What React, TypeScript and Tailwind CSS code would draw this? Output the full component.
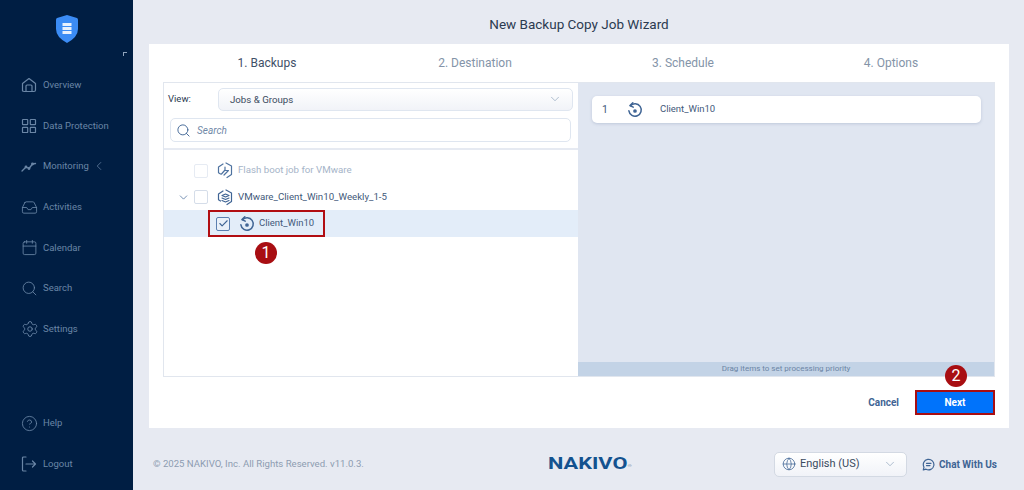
import React from "react";
import { ChevronDown, ChevronLeft, CircleHelp, Globe, Inbox, Calendar, Search, Settings, Check } from "lucide-react";

const font = "font-['Roboto',Arial,sans-serif]";
const side = "#6a86a6";

function Shield() {
  return (
    <svg width="22" height="28" viewBox="0 0 22 28">
      <path d="M11 0 L21 3 Q22 3.3 22 5 V14 Q22 22 11 28 Q0 22 0 14 V5 Q0 3.3 1 3 Z" fill="#3b8cf5" />
      <rect x="6.5" y="8" width="9" height="3" fill="#e8f1fd" />
      <rect x="6.5" y="12" width="9" height="3" fill="#e8f1fd" />
      <rect x="6.5" y="16" width="9" height="3" fill="#e8f1fd" />
    </svg>
  );
}

function Home() {
  return (
    <svg width="16" height="16" viewBox="0 0 16 16" fill="none" stroke={side} strokeWidth="1.2" strokeLinejoin="round">
      <path d="M1.5 14 V6.5 L8 1.5 L14.5 6.5 V13 Q14.5 14.5 13 14.5 H3 Q1.5 14.5 1.5 13 Z" />
      <path d="M5 14.5 V9 Q5 8 6 8 H10 Q11 8 11 9 V14.5" />
    </svg>
  );
}

function Grid() {
  return (
    <svg width="16" height="16" viewBox="0 0 16 16" fill="none" stroke={side} strokeWidth="1.2">
      <rect x="1.5" y="1.5" width="5.2" height="5.2" rx="0.6" />
      <rect x="9.3" y="1.5" width="5.2" height="5.2" rx="0.6" />
      <rect x="1.5" y="9.3" width="5.2" height="5.2" rx="0.6" />
      <rect x="9.3" y="9.3" width="5.2" height="5.2" rx="0.6" />
    </svg>
  );
}

function Trend() {
  return (
    <svg width="16" height="16" viewBox="0 0 16 16" fill="none" stroke={side} strokeWidth="1.3" strokeLinecap="round" strokeLinejoin="round">
      <path d="M1 13 L5 9 L8 10.5 L11.5 6 L14.5 5.5" />
      <circle cx="5" cy="9" r="0.8" fill={side} />
      <circle cx="8" cy="10.5" r="0.8" fill={side} />
      <circle cx="11.5" cy="6" r="0.8" fill={side} />
    </svg>
  );
}

function LogoutIcon() {
  return (
    <svg width="16" height="16" viewBox="0 0 16 16" fill="none" stroke={side} strokeWidth="1.2" strokeLinecap="round" strokeLinejoin="round">
      <path d="M5 1 H2.5 Q1.5 1 1.5 2 V14 Q1.5 15 2.5 15 H5" />
      <path d="M5 8 H14.5 M11.5 5 L14.5 8 L11.5 11" />
    </svg>
  );
}

function ChatIcon() {
  return (
    <svg width="13" height="13" viewBox="0 0 13 13" fill="none" stroke="#3f6494" strokeWidth="1.2" strokeLinecap="round" strokeLinejoin="round">
      <path d="M1.3 12 L2 9.2 A5.3 5.3 0 1 1 4 11.2 Z" />
      <path d="M4.5 5.3 H9 M4.5 7.6 H8" />
    </svg>
  );
}

function NavItem({ icon, label, extra }: { icon: React.ReactNode; label: string; extra?: React.ReactNode }) {
  return (
    <div className="h-[40.6px] flex items-center pl-[21px]">
      <span className="w-[22px] flex items-center">{icon}</span>
      <span className="text-[9.5px] text-[#6a86a6]">{label}</span>
      {extra}
    </div>
  );
}

function BackupIcon({ size = 16 }: { size?: number }) {
  return (
    <svg width={size} height={size} viewBox="0 0 16 16" fill="none" stroke="#3f6494" strokeWidth="1.5" strokeLinecap="round" strokeLinejoin="round">
      <path d="M3.4 3.8 A6.2 6.2 0 1 1 1.9 8.8" />
      <path d="M5.8 0.8 L3 3.6 L6.2 5.2" />
      <circle cx="8" cy="9" r="1.1" fill="#3f6494" />
    </svg>
  );
}

function JobIcon({ faded }: { faded?: boolean }) {
  const c = faded ? "#4f73a0" : "#3f6494";
  return (
    <svg width="16" height="17" viewBox="0 0 16 17" fill="none" stroke={c} strokeWidth="1.2" strokeLinejoin="round" strokeLinecap="round">
      <path d="M9 1 L14.5 4 V12.5 L10 15.5 M3.5 12 L1.5 10.8 V5 L6 2" />
      {faded ? (
        <path d="M4.5 12 L8 8 M8 5 V8.5 H11.5 M7 13 L11 9" />
      ) : (
        <path d="M5 6.5 L8.5 5 L12 6.5 L8.5 8 Z M5 9 L8.5 10.5 L12 9 M5 11.5 L8.5 13 L12 11.5" />
      )}
    </svg>
  );
}

function Box({ checked, faded }: { checked?: boolean; faded?: boolean }) {
  return (
    <span className={`w-[14px] h-[14px] rounded-[2px] border flex items-center justify-center shrink-0 ${checked ? "border-[#5b7fb0] bg-[#e9f0f9]" : faded ? "border-[#e6ebf3] bg-white" : "border-[#d5dde9] bg-white"}`}>
      {checked && <Check size={11} color="#3f6494" strokeWidth={2.4} />}
    </span>
  );
}

function Badge({ n }: { n: number }) {
  return (
    <span className="w-[22px] h-[22px] rounded-full bg-[#a80e12] text-white flex items-center justify-center text-[16px] leading-none">{n}</span>
  );
}

export default function App() {
  return (
    <div className={`${font} w-[1024px] h-[490px] flex overflow-hidden bg-[#e7eaf2]`}>
      <aside className="w-[133px] shrink-0 h-full bg-[#001e43] flex flex-col">
        <div className="h-[65px] flex justify-center pt-[15px]">
          <Shield />
        </div>
        <div className="h-[0px] relative">
          <span className="absolute left-[123px] top-[-13px] w-[4px] h-[4px] border-l border-t border-[#8fa3bb]" />
        </div>
        <div>
          <NavItem icon={<Home />} label="Overview" />
          <NavItem icon={<Grid />} label="Data Protection" />
          <NavItem icon={<Trend />} label="Monitoring" extra={<ChevronLeft size={14} color={side} strokeWidth={1.3} className="ml-[3px]" />} />
          <NavItem icon={<Inbox size={17} color={side} strokeWidth={1.2} />} label="Activities" />
          <NavItem icon={<Calendar size={17} color={side} strokeWidth={1.2} />} label="Calendar" />
          <NavItem icon={<Search size={17} color={side} strokeWidth={1.2} />} label="Search" />
          <NavItem icon={<Settings size={18} color={side} strokeWidth={1.2} />} label="Settings" />
        </div>
        <div className="mt-auto pb-[6px]">
          <NavItem icon={<CircleHelp size={17} color={side} strokeWidth={1.2} />} label="Help" />
          <NavItem icon={<LogoutIcon />} label="Logout" />
        </div>
      </aside>

      <main className="flex-1 min-w-0 flex flex-col pl-[16px] pr-[15px]">
        <h1 className="h-[44px] pt-[16px] text-center text-[13.5px] leading-[16px] text-[#2b3a50] font-normal">New Backup Copy Job Wizard</h1>

        <section className="h-[384px] bg-white px-[14px] flex flex-col">
          <div className="h-[38px] grid grid-cols-4 items-center text-[12px] text-center">
            <span className="text-[#3f5068]">1. Backups</span>
            <span className="text-[#8494a8]">2. Destination</span>
            <span className="text-[#8494a8]">3. Schedule</span>
            <span className="text-[#8494a8]">4. Options</span>
          </div>

          <div className="h-[295px] flex border border-[#e1e6ee]">
            <div className="w-[414px] flex flex-col">
              <div className="h-[67px] border-b-2 border-[#e6eaf2] pl-[4px] pt-[4px] flex flex-col">
                <div className="flex items-center h-[24px]">
                  <span className="w-[50px] text-[9.5px] text-[#2b3a50]">View:</span>
                  <div className="w-[355px] h-[23px] rounded-[5px] border border-[#dfe6f0] bg-gradient-to-b from-white to-[#f1f3f8] flex items-center justify-between pl-[11px] pr-[10px]">
                    <span className="text-[9.7px] leading-[14px] pt-[1px] text-[#3a4a60]">Jobs &amp; Groups</span>
                    <ChevronDown size={14} color="#8fa3bb" strokeWidth={1.2} />
                  </div>
                </div>
                <div className="mt-[7px] ml-[2px] w-[401px] h-[24px] rounded-[5px] border border-[#dfe6f0] flex items-center pl-[5px]">
                  <Search size={15} color="#3f6494" strokeWidth={1.5} />
                  <span className="ml-[6px] text-[10px] italic text-[#7189a8]">Search</span>
                </div>
              </div>

              <div className="flex flex-col pt-[7px]">
                <div className="h-[27px] flex items-center pl-[30px]">
                  <Box faded />
                  <span className="ml-[9px] flex"><JobIcon faded /></span>
                  <span className="ml-[5px] text-[9.7px] text-[#a5b4c8]">Flash boot job for VMware</span>
                </div>
                <div className="h-[26px] flex items-center pl-[13px]">
                  <ChevronDown size={13} color="#3f6494" strokeWidth={1.3} />
                  <span className="ml-[4px] flex"><Box /></span>
                  <span className="ml-[9px] flex"><JobIcon /></span>
                  <span className="ml-[5px] text-[9.7px] text-[#42597a]">VMware_Client_Win10_Weekly_1-5</span>
                </div>
                <div className="h-[27px] bg-[#e3edf9] flex items-center pl-[44px] relative">
                  <div className="absolute left-[44px] top-0 w-[117px] h-[27px] border-2 border-[#b10d12]" />
                  <span className="ml-[8px] flex"><Box checked /></span>
                  <span className="ml-[9px] flex"><BackupIcon /></span>
                  <span className="ml-[4px] text-[9.5px] text-[#42597a]">Client_Win10</span>
                  <span className="absolute left-[91px] top-[32px]"><Badge n={1} /></span>
                </div>
              </div>
            </div>

            <div className="flex-1 bg-[#e0e6f1] flex flex-col">
              <div className="flex-1 pl-[14px] pt-[13px]">
                <div className="h-[27px] w-[389px] bg-white rounded-[5px] shadow-[0_1px_3px_rgba(90,110,150,0.25)] flex items-center pl-[10px]">
                  <span className="w-[25px] text-[10.5px] text-[#42597a]">1</span>
                  <BackupIcon />
                  <span className="ml-[17px] text-[9.5px] text-[#42597a]">Client_Win10</span>
                </div>
              </div>
              <div className="h-[14px] bg-[#c3d3e6] text-center text-[8px] leading-[14px] text-[#6c85a5]">Drag items to set processing priority</div>
            </div>
          </div>

          <div className="flex-1 flex items-start justify-end pt-[13px] relative">
            <span className="text-[10px] font-bold text-[#3f6494] mr-[16px] leading-[25px]">Cancel</span>
            <button className="w-[80px] h-[25px] bg-[#0073fb] border-2 border-[#a80e12] text-white text-[10px] font-bold">Next</button>
            <span className="absolute right-[28px] top-[-12px]"><Badge n={2} /></span>
          </div>
        </section>

        <footer className="flex-1 flex items-center pt-[10px]">
          <span className="text-[9.6px] text-[#8d9cb1] w-[399px] pl-[4px]">© 2025 NAKIVO, Inc. All Rights Reserved. v11.0.3.</span>
          <span className="text-[16px] leading-none font-bold text-[#14528f] scale-x-[1.36] origin-left w-[226px]">NAKIVO<sup className="text-[4px] text-[#8d9cb1]">®</sup></span>
          <div className="w-[133px] h-[25px] rounded-[5px] border border-[#d3d9e3] bg-gradient-to-b from-white to-[#f1f3f8] flex items-center pl-[7px] pr-[9px]">
            <Globe size={14} color="#3f6494" strokeWidth={1.3} />
            <span className="ml-[4px] text-[11px] text-[#3a4a60] flex-1">English (US)</span>
            <ChevronDown size={14} color="#8fa3bb" strokeWidth={1.2} />
          </div>
          <span className="ml-[15px] flex"><ChatIcon /></span>
          <span className="ml-[4px] text-[10px] font-bold text-[#3f6494]">Chat With Us</span>
        </footer>
      </main>
    </div>
  );
}
